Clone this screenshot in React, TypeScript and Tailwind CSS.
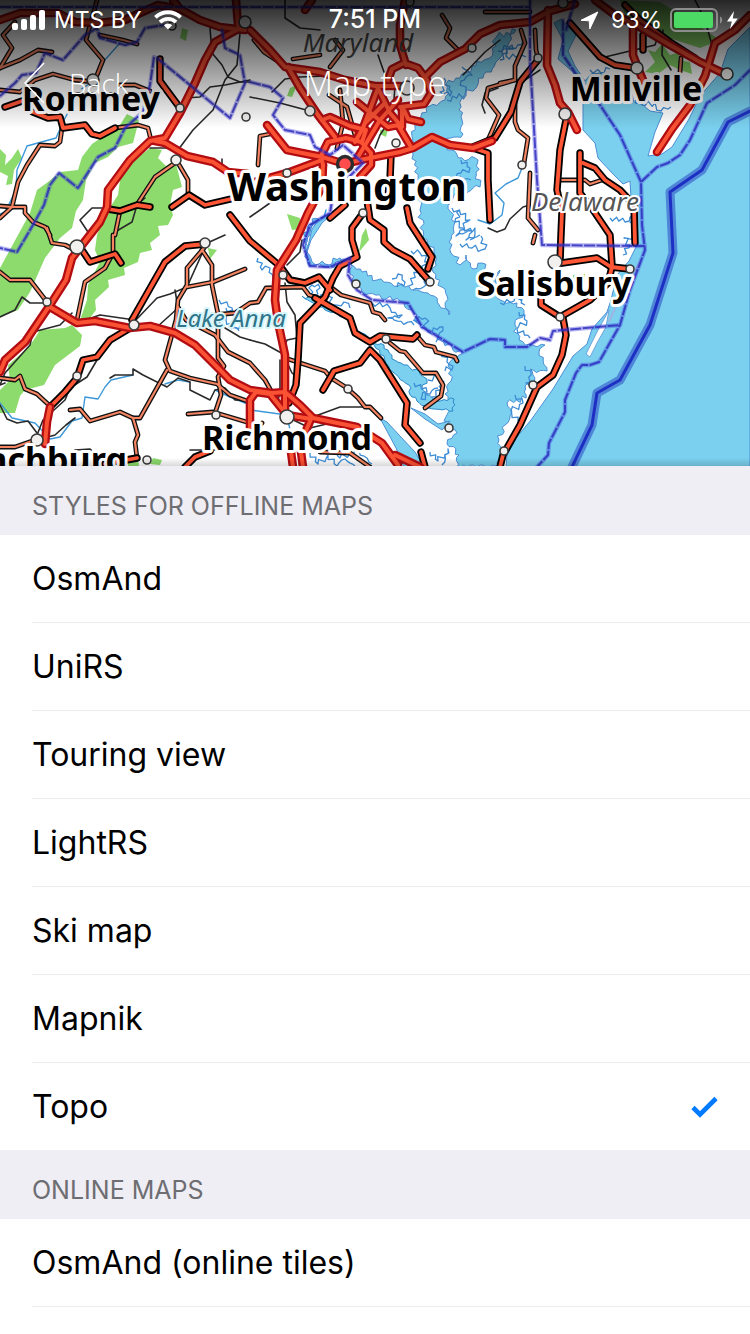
import { useState } from "react";

type Pt = [number, number];

// Adds small, repeatable inlets to every edge of a coastline.
function coast(points: Pt[], amp: number, close = true): string {
  const out: string[] = [];
  const n = close ? points.length : points.length - 1;
  let seed = 11;
  const rnd = () => {
    seed = (seed * 16807) % 2147483647;
    return (seed % 1000) / 1000 - 0.5;
  };
  for (let i = 0; i < n; i++) {
    const [x1, y1] = points[i];
    const [x2, y2] = points[(i + 1) % points.length];
    const len = Math.hypot(x2 - x1, y2 - y1);
    const steps = Math.max(1, Math.round(len / 3.4));
    for (let s = 0; s < steps; s++) {
      const t = s / steps;
      const off = s === 0 ? 0 : rnd() * amp * 2;
      const x = x1 + (x2 - x1) * t - ((y2 - y1) / len) * off;
      const y = y1 + (y2 - y1) * t + ((x2 - x1) / len) * off;
      out.push(`${x.toFixed(1)},${y.toFixed(1)}`);
    }
  }
  if (!close) out.push(points[points.length - 1].join(","));
  return `M${out.join("L")}${close ? "Z" : ""}`;
}

const greens = [
  "127,114 139,120 133,143 118,147 108,157 95,163 86,180 83,200 76,211 72,228 60,238 45,258 30,292 18,310 0,317 0,268 18,235 30,213 37,190 48,182 60,172 78,170 82,157 92,144 108,133 118,128",
  "150,148 162,150 158,158 166,166 175,160 182,187 173,190 170,205 173,215 168,225 158,226 160,235 150,243 152,250 140,253 138,262 124,268 125,275 108,280 109,287 95,300 96,310 90,318 80,320 87,300 88,285 100,262 95,250 97,235 105,215 118,195 120,180 128,165 137,158",
  "40,330 65,328 72,325 82,335 80,346 55,365 44,385 25,390 20,396 15,413 0,413 0,390 10,380 8,365 28,348 35,338",
  "0,149 6,155 5,165 12,158 18,149 22,158 14,170 12,184 6,185 8,176 0,172",
  "182,28 188,30 186,41 180,38", "287,96 290,88 297,85 292,97", "287,214 300,218 301,229 292,230",
  "362,235 366,228 369,240 359,252", "380,130 388,129 386,137 380,134", "208,248 217,250 210,259",
  "620,0 660,2 690,20 720,40 700,48 660,35 630,30", "648,50 655,52 662,44 670,55 680,52 678,60 690,62 692,74 680,70 670,65 658,74 645,72 655,62",
  "573,275 585,274 585,282 580,280 573,282", "700,36 712,37 718,45 706,44", "128,463 138,456 139,467 128,467", "153,458 162,460 160,465 150,464",
];

const bay: Pt[] = [
  [516, 30], [497, 36], [490, 58], [472, 66], [460, 78], [446, 84], [445, 100], [430, 106], [420, 120], [412, 136], [413, 155], [418, 178], [420, 210],
  [423, 238], [434, 252], [433, 272], [447, 296], [449, 315], [441, 308], [434, 296], [418, 290], [398, 286], [377, 280], [362, 272], [350, 262],
  [340, 258], [325, 264], [312, 262], [306, 244], [312, 226], [326, 216], [312, 219], [303, 240], [309, 266], [330, 267],
  [350, 259], [350, 274], [362, 292], [400, 301], [412, 310], [420, 324], [452, 347], [462, 354], [448, 366], [451, 381], [445, 394], [452, 410],
  [444, 421], [457, 433], [447, 444], [459, 455], [457, 467], [500, 467], [499, 440], [505, 425], [512, 412], [507, 403], [526, 398], [525, 386],
  [537, 384], [530, 369], [547, 371], [539, 352], [545, 345], [530, 344], [519, 340], [515, 325], [524, 314], [517, 303], [500, 300],
  [496, 283], [500, 270], [492, 279], [482, 263], [473, 269], [466, 255], [460, 265], [449, 242], [455, 222], [448, 205], [454, 195],
  [468, 192], [480, 187], [476, 172], [478, 160], [462, 158], [451, 150], [443, 145], [451, 138], [463, 134], [462, 120], [459, 110], [464, 96],
  [483, 78], [500, 58], [508, 45],
];

const ocean =
  "M750,27L728,49L720,73L700,96L689,119L672,147L662,154L648,156L655,132L663,113L650,111L643,105L634,102L632,94L619,91L613,79L600,73L591,74L585,81L575,66L568,51L576,35L561,19L554,23L563,40L558,59L573,72L583,94L583,130L595,143L598,158L614,175L623,184L630,181L631,198L638,203L637,245L629,261L617,275L611,300L607,312L592,329L587,344L573,356L553,389L531,420L516,438L507,455L506,467L750,467Z";

const rappahannock: Pt[] = [
  [302, 296], [313, 299], [322, 302], [335, 311], [344, 313], [351, 318], [358, 331], [372, 342], [384, 345], [392, 359], [404, 365], [419, 371],
  [427, 379], [422, 389], [434, 400], [454, 399], [453, 411], [428, 408], [412, 397], [409, 385], [393, 372], [384, 356], [374, 345],
  [360, 335], [353, 324], [343, 317], [325, 310],
];

const creeks: Pt[][] = [
  [[258, 258], [262, 270], [270, 268], [277, 280]],
  [[310, 295], [312, 285], [320, 288], [318, 300], [330, 305]],
  [[315, 298], [328, 296], [333, 305], [344, 302], [350, 308]],
  [[452, 208], [470, 220], [456, 236], [475, 228], [470, 240]],
  [[460, 210], [455, 222], [472, 232], [466, 240], [480, 235]],
  [[460, 244], [472, 248], [485, 249], [481, 236]],
  [[461, 160], [470, 168], [456, 178], [471, 180]],
  [[447, 100], [466, 95], [461, 81], [472, 75], [462, 67]],
  [[446, 84], [440, 92], [450, 96], [444, 78]],
  [[498, 51], [512, 45], [506, 56], [526, 57]],
  [[500, 60], [511, 48], [523, 40]],
  [[610, 218], [625, 222], [633, 211], [630, 223]],
  [[623, 255], [630, 245], [624, 238], [638, 235]],
  [[392, 279], [398, 274], [405, 282], [397, 287]],
  [[411, 251], [420, 253], [429, 262], [422, 271]],
  [[409, 286], [420, 268], [426, 285], [413, 290]],
  [[372, 303], [390, 308], [402, 315], [388, 318], [414, 325]],
  [[413, 320], [425, 318], [428, 332], [443, 327], [436, 342]],
  [[442, 352], [447, 362], [453, 366], [445, 371]],
  [[414, 383], [427, 392], [421, 399], [438, 388]],
  [[428, 380], [439, 376], [443, 389], [432, 397]],
  [[310, 453], [318, 464], [328, 455], [337, 466], [345, 459], [355, 466]],
  [[332, 447], [340, 458], [355, 450], [372, 464]],
  [[430, 452], [438, 461], [448, 449], [442, 465]],
  [[519, 312], [527, 321], [517, 329], [530, 338]],
  [[500, 303], [514, 301], [522, 296], [525, 305]],
  [[525, 366], [531, 375], [526, 383], [535, 381]],
  [[515, 395], [523, 403], [511, 411], [518, 421]],
  [[590, 70], [601, 73], [610, 69]],
  [[635, 100], [642, 105], [655, 103], [661, 111], [671, 107]],
  [[219, 300], [232, 308], [226, 320], [239, 331]],
  [[226, 308], [238, 318], [245, 325], [231, 329]],
];

const streams = [
  "120,43 103,62 95,80 80,90 64,120 56,138 27,146 17,170 16,190 5,212 0,214",
  "0,403 12,418 35,423 50,439 60,437 72,421 82,418 85,397 98,399 105,387 111,380 133,375",
  "165,384 178,380 190,382", "215,390 230,397 250,405", "522,168 518,178 506,184 495,193 504,203 502,215 490,224 478,220", "250,410 287,415 290,430",
  "312,225 324,217 326,210",
];

const paths = [
  "210,28 212,53 222,65 228,77 240,82 250,82", "185,98 200,97 210,87 225,85 250,80", "240,33 237,65 225,80 213,110 193,130 178,150",
  "272,92 285,79 300,77 325,76 345,80", "285,0 285,18 300,28 320,30", "250,97 280,103 310,111", "378,55 385,75 390,84",
  "395,85 393,115 380,135 375,148", "150,148 165,148 178,150", "90,235 80,220 92,208 102,208", "145,198 137,205 132,222 115,232",
  "0,317 15,310 22,297 30,303 47,303", "85,320 100,315 135,320", "5,383 0,385 5,373 30,345 33,332 60,325 72,313", "110,378 115,375 133,375 133,369 143,375 167,387 178,378 190,382 190,390 210,400 215,390 225,388 235,400 250,401",
  "134,322 157,298 170,294 187,287 205,247", "157,327 178,308 175,290", "0,405 7,419 17,423 28,421 37,433", "37,435 43,420 65,400 70,388 87,377 97,360", "37,440 55,435 66,425 75,418",
  "302,240 300,252 287,265", "285,283 287,302 295,315 297,338 297,380 290,400", "250,340 265,344 285,355", "297,338 287,340 284,348", "285,358 292,373 297,377", "280,360 280,390 277,407",
  "310,418 340,407 370,407", "225,328 240,337 250,340", "488,228 497,232 505,229 510,219 523,207 530,205", "525,74 517,88 515,102", "605,57 630,51 655,45 660,30", "663,30 662,55 671,70",
  "222,159 222,171 213,162", "250,217 270,203", "485,113 482,105 485,93 498,88", "287,417 310,428 335,422", "190,450 215,450 233,437", "75,450 90,449 105,462", "205,244 225,235",
  "540,70 525,80", "695,0 705,20 712,45", "463,75 485,52 500,40",
];

const minors = [
  "0,68 20,60 38,50 52,52", "15,22 3,35 12,48 0,68", "97,0 86,40 103,60 97,75", "0,90 20,92 35,80 53,74 75,80 95,82", "120,85 135,85 150,91",
  "100,35 123,40 137,44", "115,128 138,125 148,128 151,140", "62,128 60,142 55,146 40,145 27,165 18,182 12,207 0,218", "0,206 12,207 25,207 25,213 33,222 45,227 50,235",
  "120,211 115,235", "178,163 188,180 188,195", "175,163 155,177 138,203", "47,228 52,243 65,245 75,250", "113,235 113,253 105,268 85,282 77,320",
  "0,272 10,280 30,280 47,302", "0,378 15,380 20,376 25,389 37,394 50,406", "0,447 15,447 35,440", "204,248 187,268 187,285 178,300 176,320 165,360 170,371 190,378 217,384 230,395 250,402",
  "202,250 212,265 212,285 218,314 218,358 224,366 218,377 221,395 215,413", "187,287 213,282 245,269", "70,410 80,409 90,421 120,412 133,418 140,418 167,370", "133,418 138,435 135,442 137,458",
  "188,414 213,412 250,423", "178,307 186,320 215,335 228,352 250,363 265,380 275,398", "285,358 325,371 331,378 347,388 358,398 365,407 370,407 381,418",
  "213,315 235,313 250,303 258,302 266,288 303,287 309,295 325,300", "328,285 341,295 370,303 373,312 380,314 385,320", "418,337 425,345 434,347 436,352 455,357 457,361", "390,343 400,351 405,352 423,373 436,373 443,385 441,396 425,408",
  "515,98 515,122 518,130 528,138 524,163", "530,173 528,218 538,230", "557,180 585,180 590,184 602,180", "535,235 533,243", "500,83 515,80 515,66 525,43 521,30",
  "275,133 260,136 258,165", "329,95 347,107 355,135", "340,90 343,123 337,148", "515,80 488,88 486,98 499,115 488,140", "442,15 450,28 446,38 458,50", "330,67 343,50 335,40", "535,30 536,50 538,58", "681,58 680,72",
  "293,59 320,55", "262,423 250,435 230,445", "320,452 350,453 370,467", "380,440 390,452 400,463", "485,12 530,12", "254,40 264,52 285,66",
];

const majors = [
  "5,107 25,100", "33,112 48,118 60,117 63,128 85,125 92,134 100,136 115,128", "160,59 160,81 180,108", "108,209 120,211 137,205 150,207", "172,207 189,195 205,205 235,198",
  "80,247 90,262 115,254 121,263", "132,320 165,262 185,246 205,244", "130,328 110,340 97,357 83,360 77,378 65,392 50,407", "230,215 250,241 280,266 290,280 305,283 319,277 330,290",
  "391,155 390,180 388,195", "407,208 410,223 432,257 428,269", "363,213 352,228 352,240 357,257 340,266 333,278 325,297 300,323 298,360 296,385 289,403", "367,200 370,220 384,230 384,242 393,250 410,259 430,282",
  "315,298 350,318 355,333 370,342 380,336 413,339 417,335", "323,390 334,371 360,363 370,350 380,360 407,403 405,425 420,443", "421,452 425,467", "330,218 345,205",
  "473,148 488,153 488,180 490,220", "566,120 560,150 557,190 562,212 561,235 560,262", "538,60 520,82 511,112 495,138 473,147", "570,23 585,40 600,57 615,65 635,68", "580,153 580,193 591,207 610,235 612,265",
  "583,163 595,168 605,180 620,190 634,205 635,243", "555,264 597,258 611,267 630,269", "612,267 608,283 590,300 560,317 541,305 541,292", "563,318 566,335 562,355 553,375 537,387 520,425 503,455 500,467",
  "185,467 195,457 210,451", "105,464 137,458", "643,35 643,50", "625,5 640,20 670,42 695,58",
];

const motorways = [
  "0,20 20,13 58,13 75,22 98,23 125,20 140,13 158,5 180,9 200,20 220,27 245,30", "240,28 215,42 205,60 195,83 180,113 165,138 150,141 130,160 108,190 107,207 100,222 72,258 66,280 50,305 25,342 5,360 0,372",
  "155,141 165,143 187,156 213,162 228,172 248,174", "250,30 270,50 285,67 320,72 345,80 375,86 400,86", "288,67 300,88 318,115 335,137", "323,165 321,156 328,142 346,138 361,142 371,153 371,165 360,177",
  "267,125 287,150 322,157 345,164 360,160 400,152 413,148 432,137 450,145 473,148 492,141", "248,184 287,173 322,160", "323,165 322,187 308,213 296,240 277,270 275,300 278,322 285,355 285,415",
  "322,120 330,117 350,126 366,130 362,142", "357,102 388,127 398,125 411,147", "378,88 363,128 355,142", "398,100 380,120 358,157", "388,80 392,69 404,63 418,68 427,80 431,93 424,104 400,107", "404,110 408,119 421,122",
  "405,0 400,25 400,45 406,65", "425,77 440,62 465,49 480,34 500,25 530,22 550,11 575,4", "402,107 402,125", "378,88 390,113 402,127",
  "50,307 77,323 95,321 130,328 150,326 175,333 195,345 230,380 250,390 272,393 285,392 300,405 313,418 357,427 382,443 398,465", "50,407 47,422 45,444",
  "250,430 250,400 256,392 270,394 287,415 311,419 302,440", "291,452 293,467", "301,452 303,467", "548,10 547,65 555,85 560,103 568,112 577,130", "595,0 615,15 640,27 670,45 700,62 725,74", "633,25 633,55 638,68 645,85", "750,15 735,30 715,43 705,76 690,105 672,129 657,152",
  "238,25 236,0", "305,10 312,0", "395,455 420,467", "385,103 366,122", "173,0 180,9",
];

const borders = [
  "0,7 530,7", "0,96 15,83 22,75 36,73 45,53 63,60 85,35 97,28 100,38 125,45 137,42 145,28 165,25", "154,57 150,85 143,112 125,128 115,148 98,157 78,188 59,173 50,185 44,205 33,225 17,252 0,248",
  "157,58 230,118 245,83 240,55 225,48 222,30", "250,82 270,87 283,98 273,115 285,130 310,135 315,147 330,155 343,145 363,163 350,176 333,195 330,213 310,225 303,245 310,266 330,267 350,258 348,275 357,290 372,300 408,303 422,327 463,352 490,339 505,340 505,347 527,347 540,338 550,340 553,331 620,325",
  "530,0 530,60 537,180 542,245 645,246", "750,70 735,85 707,103 690,140 680,155 668,163 657,167 641,182 642,225 645,250 630,290 620,325 599,362 590,365 582,365 576,373 565,400 565,412 549,443 548,455 537,467",
  "563,20 563,55 580,80 600,105 620,135 641,182", "575,0 566,30",
];

const seaLine = "750,111 728,122 702,170 670,192 673,253 650,325 620,380 597,393 592,425 572,467";

const towns: [number, number, number][] = [
  [93, 80, 6], [180, 108, 4], [246, 117, 4], [176, 160, 5], [172, 26, 4], [310, 111, 5], [287, 173, 4], [472, 48, 4], [396, 143, 4], [363, 213, 4], [245, 22, 6],
  [410, 2, 4], [407, 88, 7], [538, 58, 4], [565, 114, 6], [637, 68, 6], [727, 74, 6], [522, 165, 4], [563, 3, 5], [77, 247, 7], [205, 243, 5], [47, 302, 4],
  [134, 325, 5], [77, 376, 4], [37, 440, 6], [216, 415, 4], [147, 460, 4], [283, 275, 4], [356, 284, 4], [430, 282, 4], [386, 339, 4], [348, 389, 4],
  [287, 417, 7], [449, 428, 4], [555, 262, 7], [630, 269, 4], [560, 317, 4], [533, 385, 4], [504, 451, 4],
];

const cities: { name: string; x: number; y: number; size: number }[] = [
  { name: "Romney", x: 91, y: 111, size: 34 },
  { name: "Washington", x: 347, y: 201, size: 40 },
  { name: "Millville", x: 636, y: 101, size: 34 },
  { name: "Salisbury", x: 554, y: 296, size: 34 },
  { name: "Richmond", x: 287, y: 450, size: 34 },
  { name: "Lynchburg", x: 37, y: 472, size: 34 },
];

function Lines({ list, color, width, dash, opacity }: { list: string[]; color: string; width: number; dash?: string; opacity?: number }) {
  return (
    <g fill="none" stroke={color} strokeWidth={width} strokeLinejoin="round" strokeLinecap={dash ? "butt" : "round"} strokeDasharray={dash} opacity={opacity}>
      {list.map((p) => (
        <polyline key={p} points={p} />
      ))}
    </g>
  );
}

function RegionMap() {
  return (
    <svg viewBox="0 0 750 466" preserveAspectRatio="xMidYMid slice" className="block h-full w-full" role="img" aria-label="Map preview">
      <rect width="750" height="466" fill="#ffffff" />
      {greens.map((p) => (
        <polygon key={p} points={p} fill="#8cdb6c" />
      ))}
      <g fill="#7ad0ee" stroke="#4d8fd6" strokeWidth="1" strokeLinejoin="round">
        <path d={ocean} />
        <path d={coast(bay, 3)} />
        <path d={coast(rappahannock, 2)} stroke="#2b8acb" />
        <path d="M380,418L387,422L400,436L415,452L424,467L404,467L396,448Z" />
        <path d="M411,408L425,414L438,424L450,421L442,430L425,419Z" />
        <path d="M312,229L320,218L334,212L322,223L311,240L306,255Z" />
      </g>
      <path d="M586,354L597,332L609,310L606,327L597,343L590,357Z" fill="#fff" stroke="#6fa4dc" />
      <path d="M609,322L622,292L640,262" fill="none" stroke="#9fb4e4" strokeWidth="2" />
      <g fill="none" stroke="#3d8dd6" strokeWidth="1.3" strokeLinejoin="round">
        {creeks.map((c) => (
          <path key={c.join()} d={coast(c, 3, false)} />
        ))}
      </g>
      <Lines list={streams} color="#3c98d8" width={1.4} />
      <Lines list={paths} color="#2a2a2a" width={1.6} />
      <Lines list={minors} color="#111111" width={4.8} />
      <Lines list={minors} color="#f58462" width={2.2} />
      <Lines list={majors} color="#000000" width={7.4} />
      <Lines list={majors} color="#ff5636" width={3.8} />
      <Lines list={motorways} color="#b30d12" width={8.6} />
      <Lines list={motorways} color="#fb5234" width={4} />
      <Lines list={borders} color="#3a35d8" width={4.4} opacity={0.35} />
      <Lines list={borders} color="#2a29bd" width={2} dash="11 1.5" opacity={0.8} />
      <Lines list={[seaLine]} color="#4f86d8" width={9} />
      <Lines list={[seaLine]} color="#1e30c4" width={3} />
      {towns.map(([x, y, r]) => (
        <circle key={`${x}-${y}`} cx={x} cy={y} r={r} fill="#f1f0ef" stroke="#3a3a3a" strokeWidth="1.6" />
      ))}
      <circle cx="345" cy="164" r="7.5" fill="#ff4c4c" stroke="#2b2b2b" strokeWidth="3.4" />
      <g textAnchor="middle" paintOrder="stroke" strokeLinejoin="round" fontFamily='"Noto Sans", sans-serif'>
        <g fill="#000" stroke="#fff" strokeWidth="6" fontWeight="700">
          {cities.map((c) => (
            <text key={c.name} x={c.x} y={c.y} fontSize={c.size}>
              {c.name}
            </text>
          ))}
        </g>
        <g fontStyle="italic" strokeWidth="4">
          <text x="358" y="52" fontSize="26" fill="#4c4c4c" stroke="none">Maryland</text>
          <text x="585" y="211" fontSize="26" fill="#555" stroke="#fff">Delaware</text>
          <text x="231" y="327" fontSize="24" fill="#2f7489" stroke="#d8f5fc">Lake Anna</text>
        </g>
      </g>
    </svg>
  );
}

function StatusBar() {
  return (
    <div className="grid h-10 grid-cols-[1fr_auto_1fr] items-center px-3 text-[23px] text-white">
      <div className="flex items-center gap-2">
        <svg width="34" height="20" viewBox="0 0 34 20" fill="#fff" aria-label="Signal">
          <rect x="0" y="13" width="6" height="7" rx="2" />
          <rect x="9" y="9" width="6" height="11" rx="2" />
          <rect x="18" y="5" width="6" height="15" rx="2" />
          <rect x="27" y="0" width="6" height="20" rx="2" />
        </svg>
        <span>MTS BY</span>
        <svg width="28" height="20" viewBox="0 0 28 20" fill="none" stroke="#fff" strokeWidth="3.8" aria-label="Wi-Fi" className="ml-1">
          <path d="M1.4 7.4a18 18 0 0 1 25.200 0" />
          <path d="M6 12.2a11.4 11.4 0 0 1 16 0" />
          <path d="M14 19.6l-4.2-4.4a6 6 0 0 1 8.4 0z" fill="#fff" stroke="none" />
        </svg>
      </div>
      <span className="text-[25px] font-medium">7:51 PM</span>
      <div className="flex items-center justify-end">
        <svg width="19" height="19" viewBox="0 0 19 19" fill="#fff" stroke="#fff" strokeLinejoin="round" aria-label="Location" className="mr-3">
          <path d="M17.800 1L1 9.300l8.200.500.600 8.200z" />
        </svg>
        <span>93%</span>
        <svg width="68" height="24" viewBox="0 0 68 24" aria-label="Battery charging" className="ml-2">
          <rect x="1" y="1" width="46" height="22" rx="5" fill="none" stroke="#8c8c8c" strokeWidth="2" />
          <rect x="4" y="4" width="39" height="16" rx="2" fill="#4cd964" />
          <path d="M50 8.500c3 1.200 3 5.800 0 7z" fill="#8c8c8c" />
          <path d="M64 3L57 13.400h4.800L60 21l7.800-10.400h-5z" fill="#fff" />
        </svg>
      </div>
    </div>
  );
}

function SectionTitle({ children }: { children: string }) {
  return <h2 className="flex h-[69px] items-center bg-[#efeef4] px-8 pt-3 text-[25px] font-normal text-[#6d6d72] uppercase">{children}</h2>;
}

function StyleList({ items, selected, onSelect }: { items: string[]; selected: string; onSelect: (name: string) => void }) {
  return (
    <ul className="bg-white pl-8">
      {items.map((name) => (
        <li key={name} className="border-[#ececee] not-last:border-b only:border-b">
          <button
            type="button"
            aria-pressed={selected === name}
            onClick={() => onSelect(name)}
            className="flex h-[87px] w-full items-center justify-between pr-8 text-left text-[32px] text-black"
          >
            {name}
            {selected === name && (
              <svg width="27" height="22" viewBox="0 0 27 22" fill="none" stroke="#007aff" strokeWidth="4.6" aria-hidden="true">
                <path d="M2 11.500L9 18.500L25 2.500" />
              </svg>
            )}
          </button>
        </li>
      ))}
    </ul>
  );
}

const offline = ["OsmAnd", "UniRS", "Touring view", "LightRS", "Ski map", "Mapnik", "Topo"];
const online = ["OsmAnd (online tiles)"];

export default function App() {
  const [selected, setSelected] = useState("Topo");
  return (
    <main className="min-h-screen bg-white font-['Inter',sans-serif]">
      <div className="relative aspect-[750/466] w-full overflow-hidden">
        <RegionMap />
        <header className="absolute inset-x-0 top-0 h-32 bg-linear-to-b from-black/85 to-transparent">
          <StatusBar />
          <div className="grid h-[86px] grid-cols-[1fr_auto_1fr] items-center px-6 font-['Open_Sans',sans-serif] font-light text-white">
            <button type="button" className="flex items-center gap-6 text-[28px]">
              <svg width="21" height="42" viewBox="0 0 21 42" fill="none" stroke="#fff" strokeWidth="1.6" aria-hidden="true">
                <path d="M20 1L1 21L20 41" />
              </svg>
              Back
            </button>
            <h1 className="text-[34px] font-light">Map type</h1>
          </div>
        </header>
        <div className="absolute inset-x-0 bottom-0 h-2 bg-linear-to-b from-transparent to-black/15" />
      </div>
      <section>
        <SectionTitle>Styles for offline maps</SectionTitle>
        <StyleList items={offline} selected={selected} onSelect={setSelected} />
      </section>
      <section>
        <SectionTitle>Online maps</SectionTitle>
        <StyleList items={online} selected={selected} onSelect={setSelected} />
      </section>
    </main>
  );
}
